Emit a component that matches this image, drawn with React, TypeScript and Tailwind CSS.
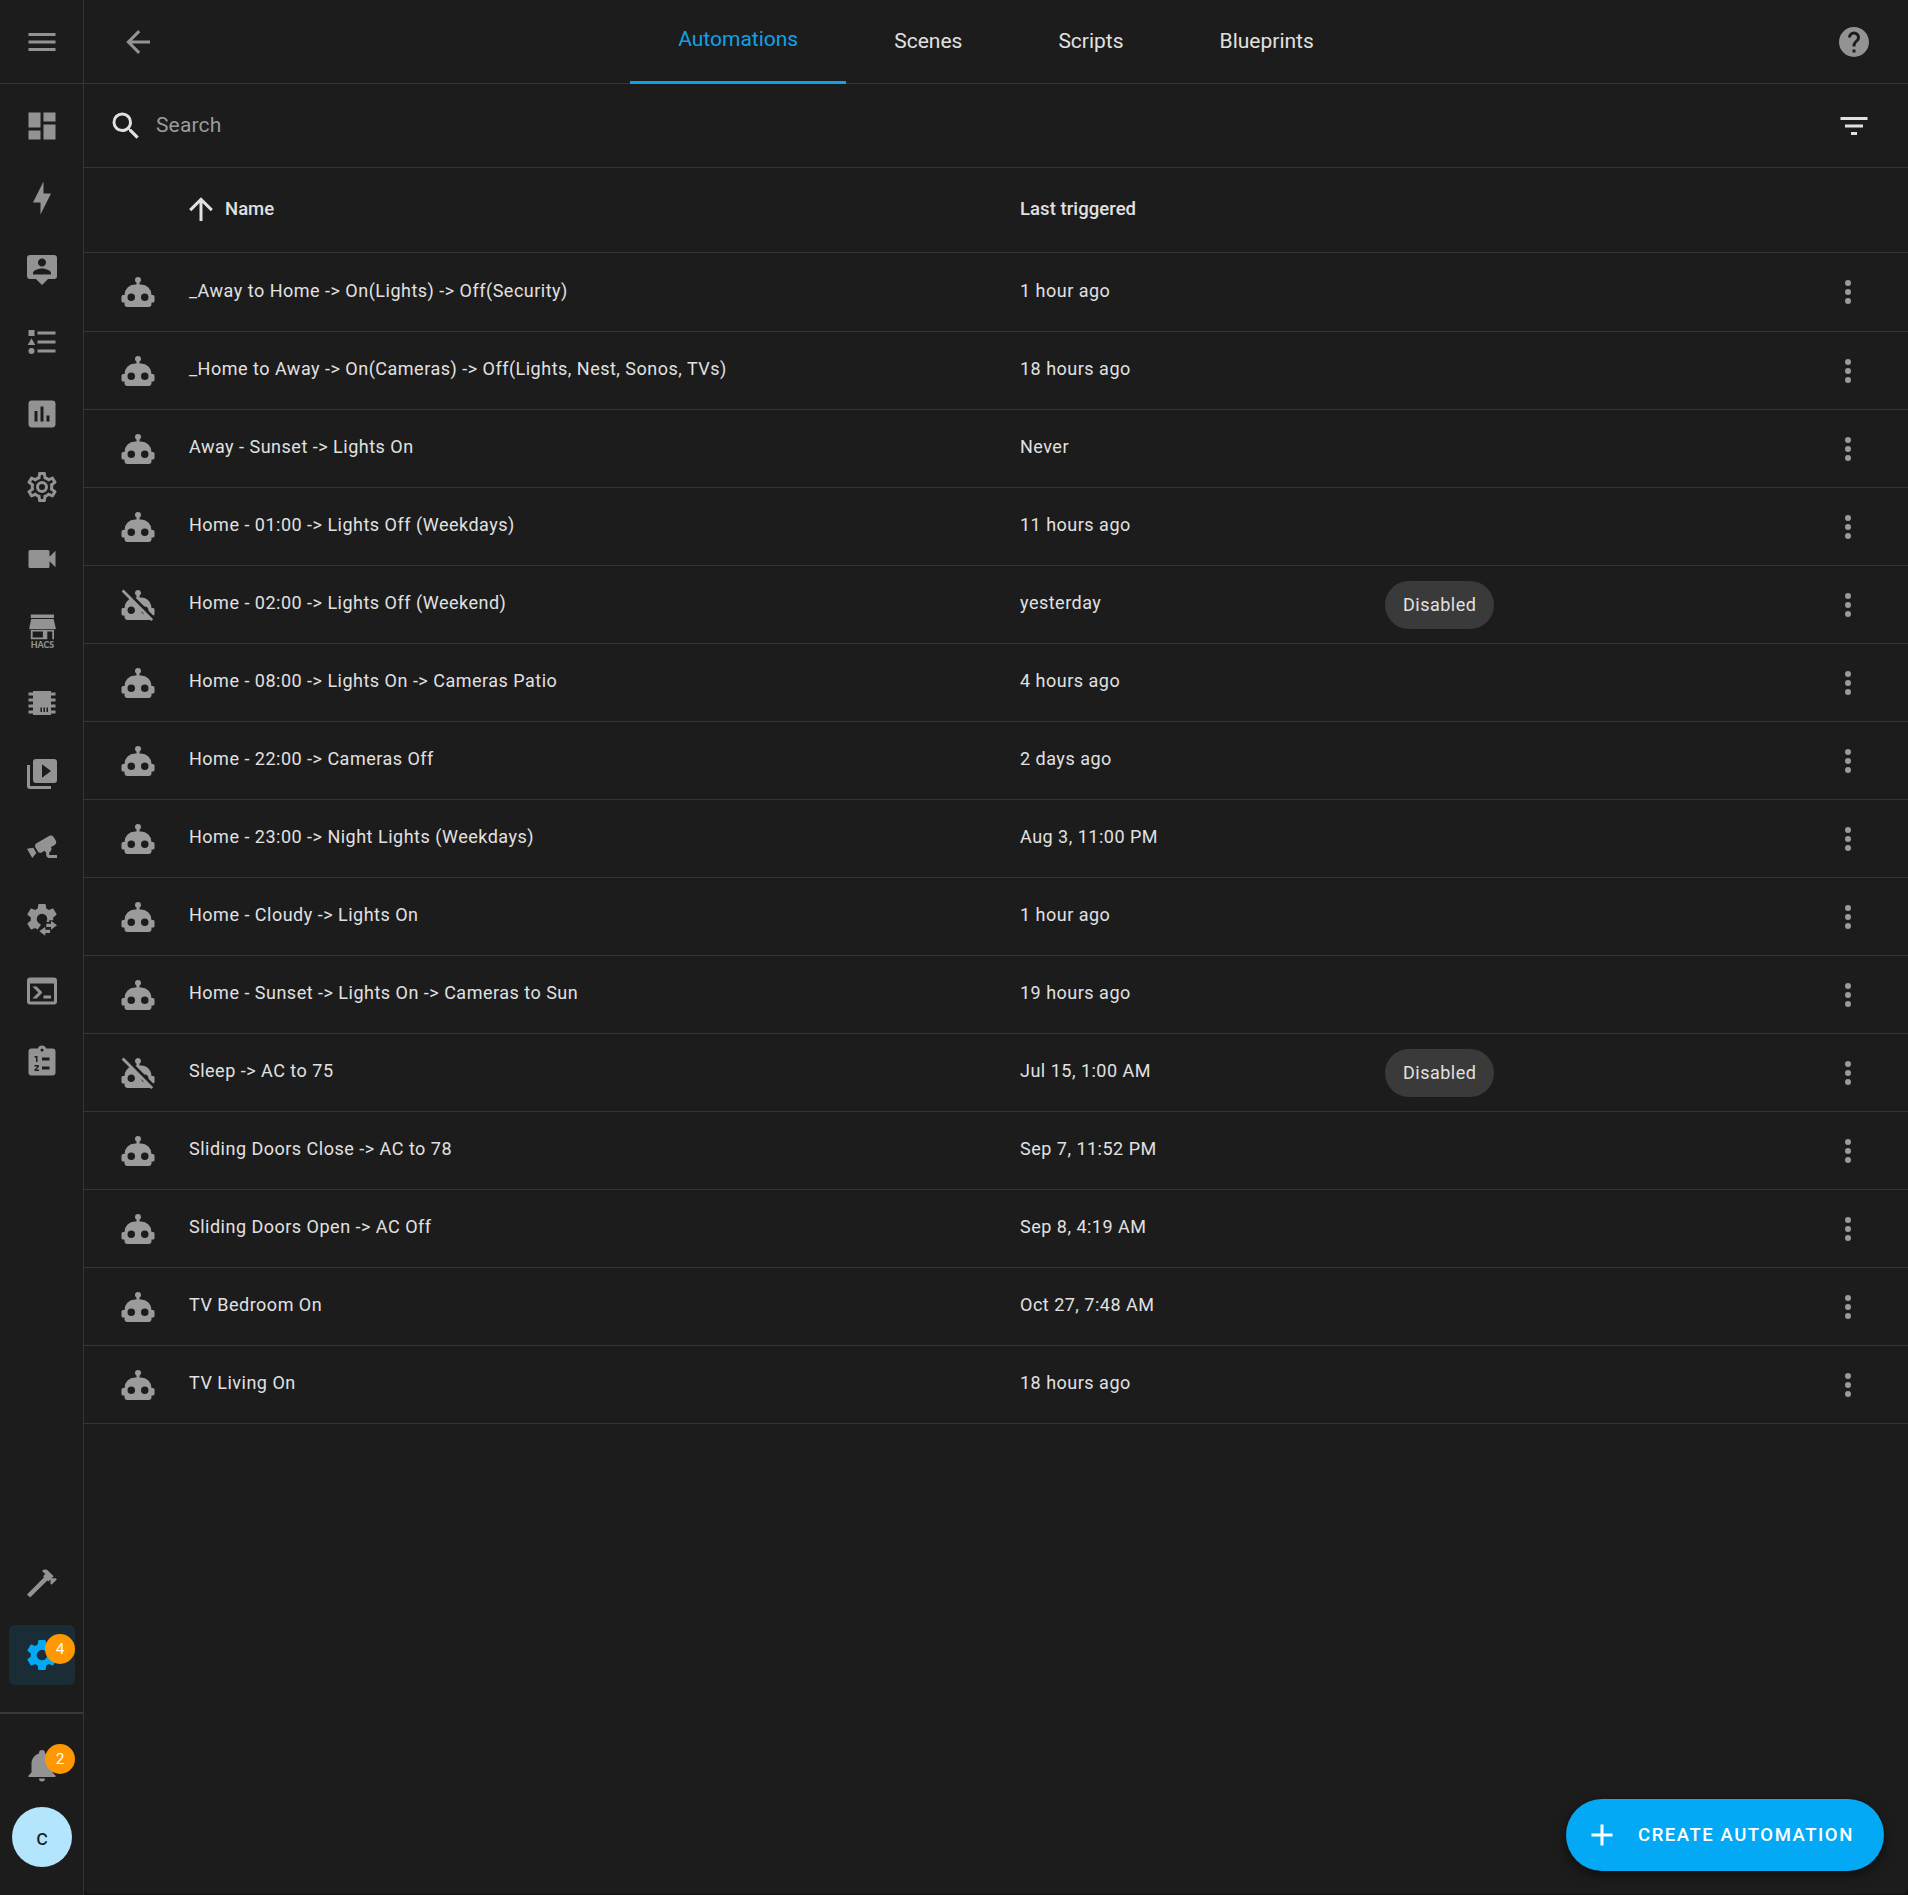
import React from "react";

const P = {
  menu: "M3,6H21V8H3V6M3,11H21V13H3V11M3,16H21V18H3V16Z",
  arrowLeft: "M20,11V13H8L13.5,18.5L12.08,19.92L4.16,12L12.08,4.08L13.5,5.5L8,11H20Z",
  arrowUp: "M13,20H11V8L5.5,13.5L4.08,12.08L12,4.16L19.92,12.08L18.5,13.5L13,8V20Z",
  help: "M15.07,11.25L14.17,12.17C13.45,12.89 13,13.5 13,15H11V14.5C11,13.39 11.45,12.39 12.17,11.67L13.41,10.41C13.78,10.05 14,9.55 14,9C14,7.89 13.1,7 12,7A2,2 0 0,0 10,9H8A4,4 0 0,1 12,5A4,4 0 0,1 16,9C16,9.88 15.64,10.67 15.07,11.25M13,19H11V17H13M12,2A10,10 0 0,0 2,12A10,10 0 0,0 12,22A10,10 0 0,0 22,12C22,6.47 17.5,2 12,2Z",
  magnify: "M9.5,3A6.5,6.5 0 0,1 16,9.5C16,11.11 15.41,12.59 14.44,13.73L14.71,14H15.5L20.5,19L19,20.5L14,15.5V14.71L13.73,14.44C12.59,15.41 11.11,16 9.5,16A6.5,6.5 0 0,1 3,9.5A6.5,6.5 0 0,1 9.5,3M9.5,5C7,5 5,7 5,9.5C5,12 7,14 9.5,14C12,14 14,12 14,9.5C14,7 12,5 9.5,5Z",
  filter: "M6,13H18V11H6M3,6V8H21V6M10,18H14V16H10V18Z",
  dots: "M12,16A2,2 0 0,1 14,18A2,2 0 0,1 12,20A2,2 0 0,1 10,18A2,2 0 0,1 12,16M12,10A2,2 0 0,1 14,12A2,2 0 0,1 12,14A2,2 0 0,1 10,12A2,2 0 0,1 12,10M12,4A2,2 0 0,1 14,6A2,2 0 0,1 12,8A2,2 0 0,1 10,6A2,2 0 0,1 12,4Z",
  plus: "M19,13H13V19H11V13H5V11H11V5H13V11H19V13Z",
  robot: "M12,2A2,2 0 0,1 14,4C14,4.74 13.6,5.39 13,5.73V7H14A7,7 0 0,1 21,14H22A1,1 0 0,1 23,15V18A1,1 0 0,1 22,19H21V20A2,2 0 0,1 19,22H5A2,2 0 0,1 3,20V19H2A1,1 0 0,1 1,18V15A1,1 0 0,1 2,14H3A7,7 0 0,1 10,7H11V5.73C10.4,5.39 10,4.74 10,4A2,2 0 0,1 12,2M7.5,13A2.5,2.5 0 0,0 5,15.5A2.5,2.5 0 0,0 7.5,18A2.5,2.5 0 0,0 10,15.5A2.5,2.5 0 0,0 7.5,13M16.5,13A2.5,2.5 0 0,0 14,15.5A2.5,2.5 0 0,0 16.5,18A2.5,2.5 0 0,0 19,15.5A2.5,2.5 0 0,0 16.5,13Z",
  robotOff: "M23,15V18C23,18.5 22.64,18.88 22.17,18.97L18.97,15.77C19,15.68 19,15.59 19,15.5C19,14.12 17.88,13 16.5,13C16.41,13 16.32,13 16.23,13.03L10.2,7H11V5.73C10.4,5.39 10,4.74 10,4C10,2.9 10.9,2 12,2C13.1,2 14,2.9 14,4C14,4.74 13.6,5.39 13,5.73V7H14C17.87,7 21,10.13 21,14H22C22.55,14 23,14.45 23,15M22.11,21.46L20.84,22.73L19.89,21.78C19.62,21.92 19.32,22 19,22H5C3.9,22 3,21.11 3,20V19H2C1.45,19 1,18.55 1,18V15C1,14.45 1.45,14 2,14H3C3,11.53 4.29,9.36 6.22,8.11L1.11,3L2.39,1.73L22.11,21.46M10,15.5C10,14.12 8.88,13 7.5,13C6.12,13 5,14.12 5,15.5C5,16.88 6.12,18 7.5,18C8.88,18 10,16.88 10,15.5M16.07,17.96L14.04,15.93C14.23,16.97 15.04,17.77 16.07,17.96Z",
  dashboard: "M13,3V9H21V3M13,21H21V11H13M3,21H11V15H3M3,13H11V3H3V13Z",
  bolt: "M11 15H6L13 1V9H18L11 23V15Z",
  person: "M20,2H4A2,2 0 0,0 2,4V16A2,2 0 0,0 4,18H8L12,22L16,18H20A2,2 0 0,0 22,16V4A2,2 0 0,0 20,2M12,4.3C13.5,4.3 14.7,5.5 14.7,7C14.7,8.5 13.5,9.7 12,9.7C10.5,9.7 9.3,8.5 9.3,7C9.3,5.5 10.5,4.3 12,4.3M18,15H6V14.1C6,12.1 10,11 12,11C14,11 18,12.1 18,14.1V15Z",
  list: "M5,9.5L7.5,14H2.5L5,9.5M3,4H7V8H3V4M5,20A2,2 0 0,0 7,18A2,2 0 0,0 5,16A2,2 0 0,0 3,18A2,2 0 0,0 5,20M9,5V7H21V5H9M9,19H21V17H9V19M9,13H21V11H9V13Z",
  chart: "M9 17H7V10H9V17M13 17H11V7H13V17M17 17H15V13H17V17M19 3H5C3.89 3 3 3.89 3 5V19C3 20.1 3.9 21 5 21H19C20.1 21 21 20.1 21 19V5C21 3.89 20.1 3 19 3Z",
  cogOutline: "M12,8A4,4 0 0,1 16,12A4,4 0 0,1 12,16A4,4 0 0,1 8,12A4,4 0 0,1 12,8M12,10A2,2 0 0,0 10,12A2,2 0 0,0 12,14A2,2 0 0,0 14,12A2,2 0 0,0 12,10M10,22C9.75,22 9.54,21.82 9.5,21.58L9.13,18.93C8.5,18.68 7.96,18.34 7.44,17.94L4.95,18.95C4.73,19.03 4.46,18.95 4.34,18.73L2.34,15.27C2.21,15.05 2.27,14.78 2.46,14.63L4.57,12.97L4.5,12L4.57,11L2.46,9.37C2.27,9.22 2.21,8.95 2.34,8.73L4.34,5.27C4.46,5.05 4.73,4.96 4.95,5.05L7.44,6.05C7.96,5.66 8.5,5.32 9.13,5.07L9.5,2.42C9.54,2.18 9.75,2 10,2H14C14.25,2 14.46,2.18 14.5,2.42L14.87,5.07C15.5,5.32 16.04,5.66 16.56,6.05L19.05,5.05C19.27,4.96 19.54,5.05 19.66,5.27L21.66,8.73C21.79,8.95 21.73,9.22 21.54,9.37L19.43,11L19.5,12L19.43,13L21.54,14.63C21.73,14.78 21.79,15.05 21.66,15.27L19.66,18.73C19.54,18.95 19.27,19.04 19.05,18.95L16.56,17.95C16.04,18.34 15.5,18.68 14.87,18.93L14.5,21.58C14.46,21.82 14.25,22 14,22H10M11.25,4L10.88,6.61C9.68,6.86 8.62,7.5 7.85,8.39L5.44,7.35L4.69,8.65L6.8,10.2C6.4,11.37 6.4,12.64 6.8,13.8L4.68,15.36L5.43,16.66L7.86,15.62C8.63,16.5 9.68,17.14 10.87,17.38L11.24,20H12.76L13.13,17.39C14.32,17.14 15.37,16.5 16.14,15.62L18.57,16.66L19.32,15.36L17.2,13.81C17.6,12.64 17.6,11.37 17.2,10.2L19.31,8.65L18.56,7.35L16.15,8.39C15.38,7.5 14.32,6.86 13.12,6.62L12.75,4H11.25Z",
  video: "M17,10.5V7A1,1 0 0,0 16,6H4A1,1 0 0,0 3,7V17A1,1 0 0,0 4,18H16A1,1 0 0,0 17,17V13.5L21,17.5V6.5L17,10.5Z",
  chip: "M6,4H18V5H21V7H18V9H21V11H18V13H21V15H18V17H21V19H18V20H6V19H3V17H6V15H3V13H6V11H3V9H6V7H3V5H6V4M11,15V18H12V15H11M13,15V18H14V15H13M15,15V18H16V15H15Z",
  play: "M4,6H2V20A2,2 0 0,0 4,22H18V20H4V6M20,2H8A2,2 0 0,0 6,4V16A2,2 0 0,0 8,18H20A2,2 0 0,0 22,16V4A2,2 0 0,0 20,2M12,14.5V5.5L18,10L12,14.5Z",
  cctv: "M18.15,4.94C17.77,4.91 17.37,5 17,5.2L8.35,10.2C7.39,10.76 7.07,12 7.62,12.94L9.12,15.53C9.67,16.5 10.89,16.82 11.85,16.27L13.65,15.23C13.92,15.69 14.32,16.06 14.81,16.27V18.04C14.81,19.13 15.7,20 16.81,20H22V18.04H16.81V16.27C17.72,15.87 18.31,14.97 18.31,14C18.31,13.54 18.19,13.11 17.97,12.73L20.5,11.27C21.47,10.71 21.8,9.5 21.24,8.53L19.74,5.94C19.4,5.34 18.79,5 18.15,4.94M6.22,13.17L2,13.87L2.75,15.17L4.75,18.63L5.5,19.93L8.22,16.63L6.22,13.17Z",
  console: "M20,19V7H4V19H20M20,3A2,2 0 0,1 22,5V19A2,2 0 0,1 20,21H4A2,2 0 0,1 2,19V5C2,3.89 2.9,3 4,3H20M13,17V15H18V17H13M9.58,13L5.57,9H8.4L11.7,12.3C12.09,12.69 12.09,13.33 11.7,13.72L8.42,17H5.59L9.58,13Z",
  clipboard: "M19,3H14.82C14.4,1.84 13.3,1 12,1C10.7,1 9.6,1.84 9.18,3H5A2,2 0 0,0 3,5V19A2,2 0 0,0 5,21H19A2,2 0 0,0 21,19V5A2,2 0 0,0 19,3M12,3A1,1 0 0,1 13,4A1,1 0 0,1 12,5A1,1 0 0,1 11,4A1,1 0 0,1 12,3M7,8H9V12H8V9H7V8M10,17V18H7V17.08L9,15H7V14H9.25A.75,.75 0 0,1 10,14.75C10,14.95 9.92,15.14 9.79,15.27L8.12,17H10M12,9H17V11H12V9M12,15H17V17H12V15Z",
  hammer: "M2,19.63L13.43,8.2L12.72,7.5L14.14,6.07L12,3.93C13.17,2.76 15.07,2.76 16.24,3.93L19.78,7.47L18.36,8.89H21.19L21.9,9.6L18.36,13.13L17.66,12.42V9.6L16.24,11L15.53,10.3L4.1,21.73L2,19.63Z",
  cog: "M12,15.5A3.5,3.5 0 0,1 8.5,12A3.5,3.5 0 0,1 12,8.5A3.5,3.5 0 0,1 15.5,12A3.5,3.5 0 0,1 12,15.5M19.43,12.97C19.47,12.65 19.5,12.33 19.5,12C19.5,11.67 19.47,11.34 19.43,11L21.54,9.37C21.73,9.22 21.78,8.95 21.66,8.73L19.66,5.27C19.54,5.05 19.27,4.96 19.05,5.05L16.56,6.05C16.04,5.66 15.5,5.32 14.87,5.07L14.5,2.42C14.46,2.18 14.25,2 14,2H10C9.75,2 9.54,2.18 9.5,2.42L9.13,5.07C8.5,5.32 7.96,5.66 7.44,6.05L4.95,5.05C4.73,4.96 4.46,5.05 4.34,5.27L2.34,8.73C2.21,8.95 2.27,9.22 2.46,9.37L4.57,11C4.53,11.34 4.5,11.67 4.5,12C4.5,12.33 4.53,12.65 4.57,12.97L2.46,14.63C2.27,14.78 2.21,15.05 2.34,15.27L4.34,18.73C4.46,18.95 4.73,19.03 4.95,18.95L7.44,17.94C7.96,18.34 8.5,18.68 9.13,18.93L9.5,21.58C9.54,21.82 9.75,22 10,22H14C14.25,22 14.46,21.82 14.5,21.58L14.87,18.93C15.5,18.67 16.04,18.34 16.56,17.94L19.05,18.95C19.27,19.03 19.54,18.95 19.66,18.73L21.66,15.27C21.78,15.05 21.73,14.78 21.54,14.63L19.43,12.97Z",
  bell: "M21,19V20H3V19L5,17V11C5,7.9 7.03,5.17 10,4.29C10,4.19 10,4.1 10,4A2,2 0 0,1 12,2A2,2 0 0,1 14,4C14,4.1 14,4.19 14,4.29C16.97,5.17 19,7.9 19,11V17L21,19M14,21A2,2 0 0,1 12,23A2,2 0 0,1 10,21",
};

function Icon({ d, className = "" }: { d: string; className?: string }) {
  return (
    <svg viewBox="0 0 24 24" className={`size-9 shrink-0 ${className}`} fill="currentColor" fillRule="evenodd" aria-hidden="true">
      <path d={d} />
    </svg>
  );
}

function HacsIcon() {
  return (
    <svg viewBox="0 0 36 36" className="size-9 shrink-0 translate-y-px overflow-visible" fill="currentColor" aria-hidden="true">
      <path d="M6.8,1.6H30V5H6.8ZM7.2,6H29.6L31.7,15V16.2H5.3V15Z" />
      <path fillRule="evenodd" d="M6.8,17H30V26.2H28.3V18.6H23.3V26.2H6.8ZM8.6,18.6V24.6H18.9V18.6Z" />
      <text x="6.8" y="35" textLength="23.4" fontFamily="Lato, sans-serif" fontWeight="900" fontSize="8.8" lengthAdjust="spacing">HACS</text>
    </svg>
  );
}

function CogTransferIcon() {
  const arrows = "M18,13.2L22,16.2L18,19.2V17.3H14.8V15.1H18ZM14.2,17.2L10.2,20.2L14.2,23.2V21.3H17.4V19.1H14.2Z";
  return (
    <svg viewBox="0 0 24 24" className="size-9 shrink-0 translate-y-px" fill="currentColor" aria-hidden="true">
      <mask id="cog-cut">
        <rect width="24" height="24" fill="white" />
        <path d="M11.5,12L14.8,14H16.8V12.8H24V24H9.2V18.8L11,16.4Z" fill="black" />
      </mask>
      <path d={P.cog} fillRule="evenodd" mask="url(#cog-cut)" />
      <path d={arrows} />
    </svg>
  );
}

const NAV = [
  <Icon d={P.dashboard} />,
  <Icon d={P.bolt} />,
  <Icon d={P.person} />,
  <Icon d={P.list} />,
  <Icon d={P.chart} />,
  <Icon d={P.cogOutline} className="translate-y-px" />,
  <Icon d={P.video} className="translate-y-px" />,
  <HacsIcon />,
  <Icon d={P.chip} className="translate-y-px" />,
  <Icon d={P.play} />,
  <Icon d={P.cctv} />,
  <CogTransferIcon />,
  <Icon d={P.console} className="translate-y-px" />,
  <Icon d={P.clipboard} />,
];

type Row = { name: string; last: string; disabled?: boolean };

const ROWS: Row[] = [
  { name: "_Away to Home -> On(Lights) -> Off(Security)", last: "1 hour ago" },
  { name: "_Home to Away -> On(Cameras) -> Off(Lights, Nest, Sonos, TVs)", last: "18 hours ago" },
  { name: "Away - Sunset -> Lights On", last: "Never" },
  { name: "Home - 01:00 -> Lights Off (Weekdays)", last: "11 hours ago" },
  { name: "Home - 02:00 -> Lights Off (Weekend)", last: "yesterday", disabled: true },
  { name: "Home - 08:00 -> Lights On -> Cameras Patio", last: "4 hours ago" },
  { name: "Home - 22:00 -> Cameras Off", last: "2 days ago" },
  { name: "Home - 23:00 -> Night Lights (Weekdays)", last: "Aug 3, 11:00 PM" },
  { name: "Home - Cloudy -> Lights On", last: "1 hour ago" },
  { name: "Home - Sunset -> Lights On -> Cameras to Sun", last: "19 hours ago" },
  { name: "Sleep -> AC to 75", last: "Jul 15, 1:00 AM", disabled: true },
  { name: "Sliding Doors Close -> AC to 78", last: "Sep 7, 11:52 PM" },
  { name: "Sliding Doors Open -> AC Off", last: "Sep 8, 4:19 AM" },
  { name: "TV Bedroom On", last: "Oct 27, 7:48 AM" },
  { name: "TV Living On", last: "18 hours ago" },
];

function NavItem({ children, badge, active }: { children: React.ReactNode; badge?: string; active?: boolean }) {
  return (
    <a className={`relative flex h-15 w-[66px] items-center justify-center rounded-md ${active ? "bg-[#1a2d37] text-[#03a9f4]" : ""}`}>
      {children}
      {badge && (
        <span className="absolute top-[9px] right-0 flex size-[30px] items-center justify-center rounded-full bg-[#ff9800] pt-px text-[15.5px] leading-none text-white">
          {badge}
        </span>
      )}
    </a>
  );
}

function Sidebar() {
  return (
    <aside className="flex w-21 shrink-0 flex-col border-r border-[#353535] bg-[#1c1c1c] text-[#939393]">
      <div className="flex h-21 shrink-0 items-center border-b border-[#353535] pl-6">
        <Icon d={P.menu} />
      </div>
      <nav className="flex grow flex-col gap-3 pt-3 pl-[9px]">
        {NAV.map((icon, i) => (
          <NavItem key={i}>{icon}</NavItem>
        ))}
      </nav>
      <div className="flex flex-col gap-3 pb-[27px] pl-[9px]">
        <NavItem><Icon d={P.hammer} /></NavItem>
        <NavItem badge="4" active><Icon d={P.cog} /></NavItem>
      </div>
      <div className="flex flex-col gap-3 border-t-2 border-[#393939] pt-[21px] pb-7 pl-[9px]">
        <NavItem badge="2"><Icon d={P.bell} /></NavItem>
        <div className="ml-[3px] flex size-15 items-center justify-center rounded-full bg-[#b3e5fc] pt-px text-[22px] leading-none text-[#1c1c1c]">
          <span>c</span>
        </div>
      </div>
    </aside>
  );
}

export default function App() {
  return (
    <div className="relative flex h-[1895px] w-[1908px] overflow-hidden bg-[#111111] font-['Roboto',sans-serif] text-[#e1e1e1]">
      <Sidebar />
      <main className="mb-px flex grow flex-col rounded-b-md bg-[#1c1c1c]">
        <header className="flex h-21 shrink-0 items-center border-b border-[#353535] pr-9 pl-9 text-[#939393]">
          <Icon d={P.arrowLeft} />
          <div className="flex h-21 grow justify-center self-start text-[21px] text-[#e1e1e1]">
            <div className="flex items-center border-b-3 border-[#12a1e6] px-12 pb-px text-[#12a1e6]">Automations</div>
            <div className="flex items-center px-12">Scenes</div>
            <div className="flex items-center px-12">Scripts</div>
            <div className="flex items-center px-12">Blueprints</div>
          </div>
          <Icon d={P.help} />
        </header>
        <div className="flex h-21 shrink-0 items-center border-b border-[#353535] pr-9 pl-6">
          <Icon d={P.magnify} />
          <div className="grow pl-3 text-[21px] tracking-[0.15px] text-[#9b9b9b]">Search</div>
          <Icon d={P.filter} />
        </div>
        <div className="flex h-[85px] shrink-0 items-center border-b border-[#353535] text-[18.5px] font-medium">
          <div className="flex w-[936px] items-center pl-[99px]">
            <Icon d={P.arrowUp} className="-translate-y-px" />
            <span className="pl-1.5">Name</span>
          </div>
          <span className="tracking-[0.06px]">Last triggered</span>
        </div>
        {ROWS.map((row, i) => (
          <div key={row.name} className={`flex shrink-0 items-center border-b border-[#353535] text-[18px] tracking-[0.495px] ${i === 0 ? "h-[79px]" : "h-[78px]"}`}>
            <div className="w-[105px] pl-9 text-[#9b9b9b]">
              <Icon d={row.disabled ? P.robotOff : P.robot} />
            </div>
            <div className={`w-[831px] ${i === 0 ? "pb-[3px]" : "pb-1"}`}>{row.name}</div>
            <div className={`w-[365px] ${i === 0 ? "pb-[3px]" : "pb-1"}`}>{row.last}</div>
            <div className="flex grow">
              {row.disabled && (
                <span className="flex h-12 items-center rounded-full bg-[#3a3a3a] px-[18px] pb-px">Disabled</span>
              )}
            </div>
            <Icon d={P.dots} className="mr-[42px] text-[#9b9b9b]" />
          </div>
        ))}
      </main>
      <button className="absolute right-6 bottom-6 flex h-18 w-[318px] items-center rounded-full bg-[#03a9f4] pl-[18px] text-[18.5px] font-medium tracking-[1.55px] whitespace-nowrap text-white shadow-[0_4px_12px_rgba(0,0,0,0.5)]">
        <Icon d={P.plus} />
        <span className="pt-0.5 pl-[18px]">CREATE AUTOMATION</span>
      </button>
    </div>
  );
}
